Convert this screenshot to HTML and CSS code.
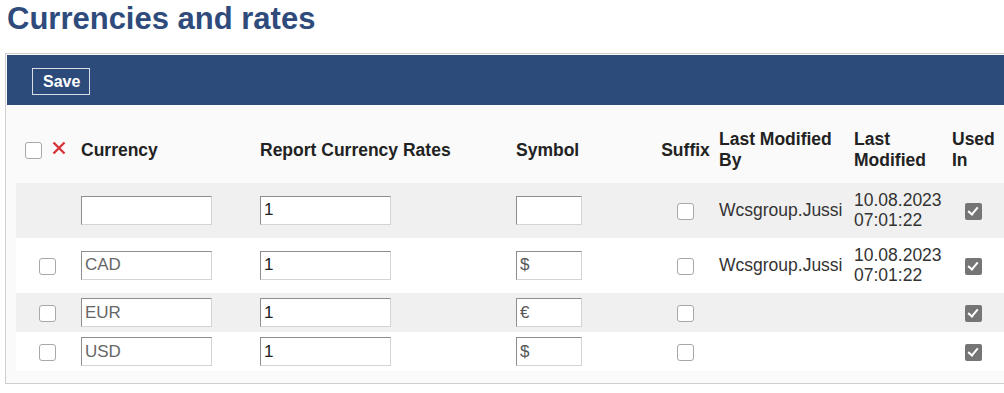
FILE: index.html
```html
<!DOCTYPE html>
<html lang="en">

<head>
    <meta charset="UTF-8">
    <title>Currencies and rates</title>
    <link rel="stylesheet" href="styles.css">
</head>

<body>
    <h1 class="page-title">Currencies and rates</h1>

    <div class="panel">
        <div class="toolbar">
            <button class="save-btn">Save</button>
        </div>

        <table class="rates-table">
            <colgroup>
                <col class="c-select">
                <col class="c-currency">
                <col class="c-rate">
                <col class="c-symbol">
                <col class="c-suffix">
                <col class="c-by">
                <col class="c-date">
                <col class="c-used">
            </colgroup>
            <thead>
                <tr>
                    <th class="select-head">
                        <input type="checkbox" class="box">
                        <svg class="del-icon" width="14" height="14" viewBox="0 0 14 14">
                            <path d="M1.5 1.5 L12.5 12.5 M12.5 1.5 L1.5 12.5" />
                        </svg>
                    </th>
                    <th>Currency</th>
                    <th>Report Currency Rates</th>
                    <th>Symbol</th>
                    <th class="center">Suffix</th>
                    <th>Last Modified By</th>
                    <th>Last Modified</th>
                    <th>Used In</th>
                </tr>
            </thead>
            <tbody>
                <tr class="alt tall">
                    <td></td>
                    <td><input type="text" class="field wide" value=""></td>
                    <td><input type="text" class="field wide rate" value="1"></td>
                    <td><input type="text" class="field narrow" value=""></td>
                    <td class="center"><input type="checkbox" class="box"></td>
                    <td class="user">Wcsgroup.Jussi</td>
                    <td class="date">10.08.2023<br>07:01:22</td>
                    <td><span class="used"></span></td>
                </tr>
                <tr class="tall">
                    <td class="center"><input type="checkbox" class="box"></td>
                    <td><input type="text" class="field wide code" value="CAD"></td>
                    <td><input type="text" class="field wide rate" value="1"></td>
                    <td><input type="text" class="field narrow sym" value="$"></td>
                    <td class="center"><input type="checkbox" class="box"></td>
                    <td class="user">Wcsgroup.Jussi</td>
                    <td class="date">10.08.2023<br>07:01:22</td>
                    <td><span class="used"></span></td>
                </tr>
                <tr class="alt">
                    <td class="center"><input type="checkbox" class="box"></td>
                    <td><input type="text" class="field wide code" value="EUR"></td>
                    <td><input type="text" class="field wide rate" value="1"></td>
                    <td><input type="text" class="field narrow sym" value="€"></td>
                    <td class="center"><input type="checkbox" class="box"></td>
                    <td></td>
                    <td></td>
                    <td><span class="used"></span></td>
                </tr>
                <tr>
                    <td class="center"><input type="checkbox" class="box"></td>
                    <td><input type="text" class="field wide code" value="USD"></td>
                    <td><input type="text" class="field wide rate" value="1"></td>
                    <td><input type="text" class="field narrow sym" value="$"></td>
                    <td class="center"><input type="checkbox" class="box"></td>
                    <td></td>
                    <td></td>
                    <td><span class="used"></span></td>
                </tr>
            </tbody>
        </table>
    </div>
</body>

</html>
```

FILE: styles.css
```css
html,
body {
    overflow: hidden;
}

body {
    margin: 0;
    font-family: "Liberation Sans", Arial, sans-serif;
    font-size: 17.5px;
    color: #2a2a2a;
    background-color: white;
}

.page-title {
    margin: 0 0 15px 7px;
    font-size: 31px;
    line-height: 38px;
    color: #2e4b7b;
}

/* panel with blue toolbar */
.panel {
    margin-left: 5px;
    width: 1020px;
    border: 1px solid #cfcfcf;
    padding: 1px 0 12px 1px;
    background-color: #fafafa;
}

.toolbar {
    background-color: #2c4a7a;
    height: 50px;
    padding: 13px 0 0 25px;
    box-sizing: border-box;
}

.save-btn {
    display: block;
    height: 27px;
    padding: 0 9px 0 10px;
    border: 1px solid #d8dde6;
    background: transparent;
    color: white;
    font-family: "Liberation Sans", Arial, sans-serif;
    font-weight: bold;
    font-size: 16px;
}

.rates-table {
    margin-left: 9px;
    border-collapse: collapse;
    table-layout: fixed;
    width: 1000px;
}

.c-select { width: 62px; }
.c-currency { width: 179px; }
.c-rate { width: 256px; }
.c-symbol { width: 142px; }
.c-suffix { width: 61px; }
.c-by { width: 135px; }
.c-date { width: 98px; }
.c-used { width: 67px; }

.rates-table th {
    text-align: left;
    vertical-align: middle;
    line-height: 21px;
    padding: 24px 3px 12px;
    font-weight: bold;
    color: #222;
}

.rates-table td {
    padding: 5px 3px;
    vertical-align: middle;
    line-height: 20px;
    white-space: nowrap;
}

.rates-table .center {
    text-align: center;
}

.rates-table tbody tr {
    background-color: white;
}

.rates-table tbody tr.alt {
    background-color: #f0f0f0;
}

.rates-table tr.tall td {
    padding-top: 7px;
    padding-bottom: 8px;
}

.select-head {
    white-space: nowrap;
}

.select-head .box {
    margin: 0 5px 0 6px;
}

.del-icon {
    vertical-align: middle;
    position: relative;
    top: -3px;
}

.del-icon path {
    stroke: #d8343a;
    stroke-width: 2.4;
    fill: none;
}

/* text inputs */
.field {
    box-sizing: border-box;
    height: 29px;
    margin: 0;
    padding: 0 3px;
    border: 1px solid;
    border-color: #8e8e8e #d4d4d4 #d4d4d4 #8e8e8e;
    background: white;
    font-family: "Liberation Sans", Arial, sans-serif;
    font-size: 17px;
    color: #222;
    vertical-align: middle;
}

.field.wide {
    width: 131px;
}

.field.narrow {
    width: 66px;
}

.field.code {
    color: #666;
}

.field.sym {
    color: #555;
}

/* checkboxes */
.box {
    appearance: none;
    -webkit-appearance: none;
    width: 17px;
    height: 17px;
    margin: 0;
    border: 1px solid #a8a8a8;
    border-radius: 3px;
    background: white;
    vertical-align: middle;
}

.used {
    display: inline-block;
    position: relative;
    width: 17px;
    height: 17px;
    margin-left: 13px;
    border-radius: 2px;
    background-color: #757575;
    vertical-align: middle;
}

.used::after {
    content: "";
    position: absolute;
    left: 5px;
    top: 2px;
    width: 4px;
    height: 8px;
    border: solid white;
    border-width: 0 2px 2px 0;
    transform: rotate(40deg);
}

.user {
    color: #333;
}

.date {
    color: #333;
}
```
